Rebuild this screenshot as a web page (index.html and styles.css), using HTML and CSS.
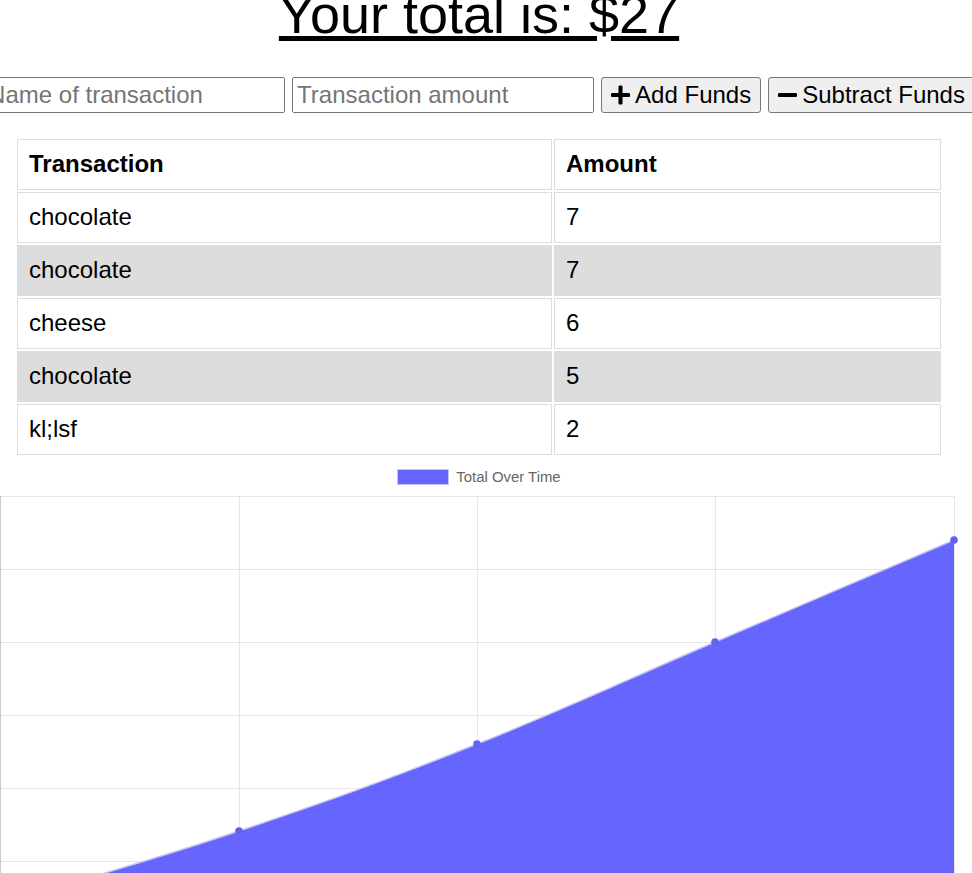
FILE: index.html
```html
<!DOCTYPE html>
<html lang="en">
<head>
<meta charset="utf-8">
<title>Budget Tracker</title>
<link rel="stylesheet" href="styles.css">
</head>
<body>
<div class="page">
  <h1 class="total">Your total is: $<span class="total-value">27</span></h1>

  <form class="controls">
    <input class="field" type="text" placeholder="Name of transaction">
    <input class="field" type="number" placeholder="Transaction amount">
    <button class="btn" type="button">
      <svg class="btn-icon" viewBox="0 0 448 512" width="19" height="22" aria-hidden="true"><path d="M416 208H272V64c0-17.67-14.33-32-32-32h-32c-17.67 0-32 14.33-32 32v144H32c-17.67 0-32 14.33-32 32v32c0 17.670 14.33 32 32 32h144v144c0 17.67 14.33 32 32 32h32c17.67 0 32-14.33 32-32V304h144c17.67 0 32-14.330 32-32v-32c0-17.67-14.33-32-32-32z"/></svg>
      <span>Add Funds</span>
    </button>
    <button class="btn" type="button">
      <svg class="btn-icon" viewBox="0 0 448 512" width="19" height="22" aria-hidden="true"><path d="M416 208H32c-17.67 0-32 14.33-32 32v32c0 17.67 14.33 32 32 32h384c17.67 0 32-14.33 32-32v-32c0-17.67-14.33-32-32-32z"/></svg>
      <span>Subtract Funds</span>
    </button>
  </form>

  <table class="ledger">
    <thead>
      <tr><th class="col-name">Transaction</th><th>Amount</th></tr>
    </thead>
    <tbody>
      <tr><td>chocolate</td><td>7</td></tr>
      <tr><td>chocolate</td><td>7</td></tr>
      <tr><td>cheese</td><td>6</td></tr>
      <tr><td>chocolate</td><td>5</td></tr>
      <tr><td>kl;lsf</td><td>2</td></tr>
    </tbody>
  </table>

  <div class="chart">
    <div class="legend">
      <span class="legend-swatch"></span>
      <span class="legend-label">Total Over Time</span>
    </div>
    <svg class="chart-svg" width="958" height="388" viewBox="0 485 958 388" aria-hidden="true">
      <g stroke="#e6e6e6" stroke-width="1" fill="none">
        <line x1="0" y1="496.5" x2="955" y2="496.5"/>
        <line x1="0" y1="569.5" x2="955" y2="569.5"/>
        <line x1="0" y1="642.5" x2="955" y2="642.5"/>
        <line x1="0" y1="715.5" x2="955" y2="715.5"/>
        <line x1="0" y1="788.5" x2="955" y2="788.5"/>
        <line x1="0" y1="861.5" x2="955" y2="861.5"/>
        <line x1="239.5" y1="496" x2="239.5" y2="873"/>
        <line x1="477.5" y1="496" x2="477.5" y2="873"/>
        <line x1="715.5" y1="496" x2="715.5" y2="873"/>
        <line x1="954.5" y1="496" x2="954.5" y2="873"/>
      </g>
      <line x1="0.5" y1="496" x2="0.5" y2="873" stroke="#cccccc" stroke-width="1"/>
      <path fill="#6666ff" d="M1,904 C96.2,874.8 144.7,862.7 239,831 C335.1,798.7 382.8,781.4 477,744 C573.2,705.8 619.8,682.7 715,642 C810.6,601.1 858.4,580.8 954,540 L954,933 L1,933 Z"/>
      <path fill="none" stroke="#c6c6f0" stroke-width="1.4" d="M1,904 C96.2,874.8 144.7,862.7 239,831 C335.1,798.7 382.8,781.4 477,744 C573.2,705.8 619.8,682.7 715,642 C810.6,601.1 858.4,580.8 954,540"/>
      <g fill="#6161f2">
        <circle cx="239" cy="831" r="3.8"/>
        <circle cx="477" cy="744" r="3.8"/>
        <circle cx="715" cy="642" r="3.8"/>
        <circle cx="954" cy="540" r="3.8"/>
      </g>
    </svg>
  </div>
</div>
</body>
</html>
```

FILE: styles.css
```css
html, body {
  margin: 0;
  padding: 0;
  overflow: hidden;
  background: #ffffff;
}

body {
  font-family: "Liberation Sans", Arial, sans-serif;
  color: #000000;
}

.page {
  width: 958px;
}

.total {
  margin: -16px 0 0;
  font-size: 54px;
  line-height: 61px;
  font-weight: normal;
  text-align: center;
  text-decoration: underline;
}

.controls {
  display: flex;
  justify-content: center;
  gap: 7px;
  margin: 32px 0 0;
  height: 36px;
}

.field {
  flex: 0 0 302px;
  box-sizing: border-box;
  width: 302px;
  height: 36px;
  margin: 0;
  padding: 0 4px;
  border: 1px solid #767676;
  border-radius: 2px;
  font-family: "Liberation Sans", Arial, sans-serif;
  font-size: 24px;
  color: #000000;
  background: #ffffff;
}

.field::placeholder {
  color: #757575;
  opacity: 1;
}

.btn {
  flex: 0 0 auto;
  display: flex;
  align-items: center;
  gap: 5px;
  box-sizing: border-box;
  height: 36px;
  margin: 0;
  padding: 0 9px;
  border: 1px solid #767676;
  border-radius: 3px;
  background: #efefef;
  font-family: "Liberation Sans", Arial, sans-serif;
  font-size: 24px;
  color: #000000;
  white-space: nowrap;
}

.btn-icon {
  display: block;
  fill: #000000;
}

.ledger {
  width: 928px;
  margin: 24px auto 0;
  table-layout: fixed;
  border-collapse: separate;
  border-spacing: 2px;
  font-size: 24px;
}

.ledger th,
.ledger td {
  box-sizing: border-box;
  padding: 10px 11px 12px;
  border: 1px solid #dddddd;
  line-height: 27px;
  text-align: left;
  vertical-align: middle;
}

.ledger th {
  font-weight: bold;
}

.ledger .col-name {
  width: 535px;
}

.ledger tbody tr:nth-child(even) td {
  background: #dddddd;
}

.chart {
  display: flex;
  flex-direction: column;
}

.legend {
  display: flex;
  justify-content: center;
  align-items: center;
  gap: 7px;
  padding-top: 12px;
  height: 16px;
}

.legend-swatch {
  box-sizing: border-box;
  width: 52px;
  height: 16px;
  background: #6666ff;
  border: 1px solid #c4c4f4;
}

.legend-label {
  font-family: "Liberation Sans", Arial, sans-serif;
  font-size: 14.9px;
  line-height: 16px;
  color: #666666;
}

.chart-svg {
  display: block;
}
```
